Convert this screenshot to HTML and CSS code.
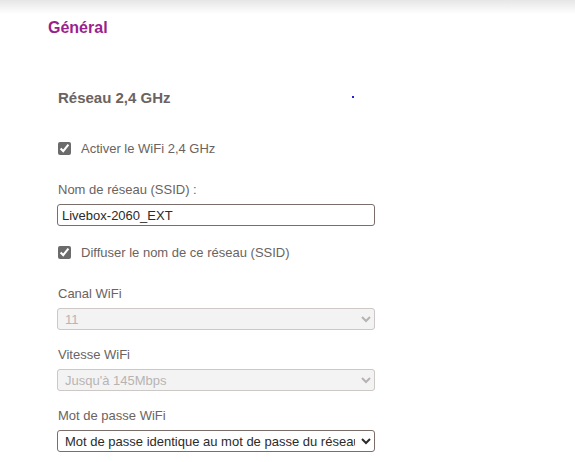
FILE: index.html
```html
<!DOCTYPE html>
<html lang="fr">
    <head>
        <meta charset="utf-8">
        <title>Paramètres WiFi</title>
        <link rel="stylesheet" href="styles.css">
    </head>
    <body>
        <div id="topShadow"></div>
        <div id="mainContainer">
            <h1 class="pageTitle">Général</h1>

            <div class="section">
                <div class="sectionHeader">
                    <h2 class="sectionTitle">Réseau 2,4 GHz</h2>
                    <span class="marker"></span>
                </div>

                <label class="checkRow firstRow">
                    <input type="checkbox" checked>
                    <span>Activer le WiFi 2,4 GHz</span>
                </label>

                <label class="fieldLabel gapLarge" for="ssidInput">Nom de réseau (SSID) :</label>
                <input type="text" id="ssidInput" class="field" value="Livebox-2060_EXT">

                <label class="checkRow gapCheck">
                    <input type="checkbox" checked>
                    <span>Diffuser le nom de ce réseau (SSID)</span>
                </label>

                <label class="fieldLabel gapLarge" for="channelSelect">Canal WiFi</label>
                <select id="channelSelect" class="field" disabled>
                    <option>11</option>
                </select>

                <label class="fieldLabel gapSmall" for="speedSelect">Vitesse WiFi</label>
                <select id="speedSelect" class="field" disabled>
                    <option>Jusqu'à 145Mbps</option>
                </select>

                <label class="fieldLabel gapSmall" for="passwordSelect">Mot de passe WiFi</label>
                <select id="passwordSelect" class="field">
                    <option>Mot de passe identique au mot de passe du réseau principal</option>
                </select>
            </div>
        </div>
    </body>
</html>
```

FILE: styles.css
```css
body{
    margin: 0;
    background-color: #fff;
    font-family: "Liberation Sans", Arial, sans-serif;
    color: #6b6360;
}

#topShadow{
    height: 14px;
    background: linear-gradient(#e6e6e6, #fff);
}

#mainContainer{
    padding-left: 48px;
}

.pageTitle{
    margin: 4px 0 0 0;
    font-size: 16px;
    line-height: 20px;
    color: #9b1f8d;
}

.section{
    padding-left: 9px;
    width: 318px;
}

.sectionHeader{
    position: relative;
    margin-top: 51px;
}

.sectionTitle{
    margin: 0;
    font-size: 15px;
    line-height: 18px;
    color: #6b6361;
    padding-left: 1px;
}

.marker{
    position: absolute;
    left: 295px;
    top: 7px;
    width: 2px;
    height: 2px;
    background-color: #2020e0;
}

.checkRow{
    display: flex;
    align-items: center;
    height: 20px;
    font-size: 13px;
}

.checkRow input{
    margin: 0 10px 0 1px;
    width: 13px;
    height: 13px;
    accent-color: #6b6b6b;
}

.firstRow{
    margin-top: 31px;
}

.gapCheck{
    margin-top: 16px;
}

.fieldLabel{
    display: block;
    font-size: 13px;
    line-height: 16px;
    padding-left: 1px;
}

.gapLarge{
    margin-top: 24px;
}

.gapSmall{
    margin-top: 17px;
}

.field{
    display: block;
    box-sizing: border-box;
    width: 318px;
    height: 22px;
    margin-top: 6px;
    border: 1px solid #7a6e6a;
    border-radius: 3px;
    font-family: "Liberation Sans", Arial, sans-serif;
    font-size: 13px;
    color: #2b2b2b;
    background-color: #fff;
}

input.field{
    padding: 0 4px;
}

select.field{
    padding: 0 3px;
}

select.field:disabled{
    background-color: #efeeee;
    border-color: #b8b0ad;
    color: #9a9492;
}
```
